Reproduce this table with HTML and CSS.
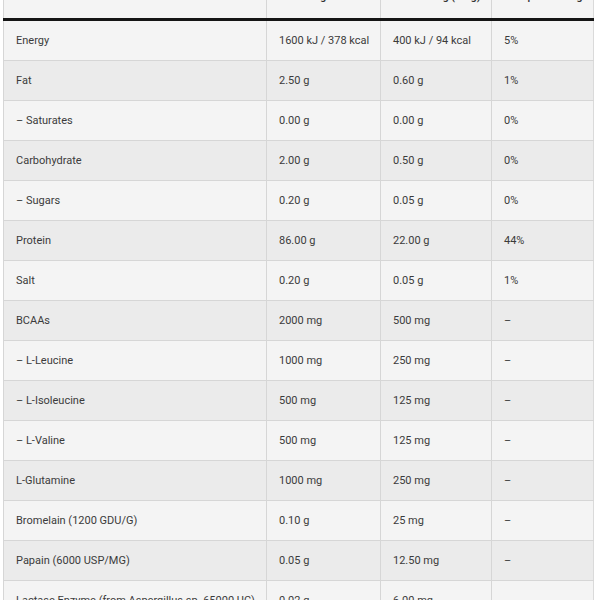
FILE: index.html
```html
<!DOCTYPE html>
<html>
<head>
<meta charset="utf-8">
<link rel="stylesheet" href="styles.css">
</head>
<body>
<div class="wrap">
<table class="nutri">
<colgroup>
<col class="c1"><col class="c2"><col class="c3"><col class="c4">
</colgroup>
<thead>
<tr><th>Nutrition facts</th><th>Per 100 g</th><th>Per serving (25 g)</th><th>% RI per serving</th></tr>
</thead>
<tbody>
<tr><td>Energy</td><td>1600 kJ / 378 kcal</td><td>400 kJ / 94 kcal</td><td>5%</td></tr>
<tr><td>Fat</td><td>2.50 g</td><td>0.60 g</td><td>1%</td></tr>
<tr><td>– Saturates</td><td>0.00 g</td><td>0.00 g</td><td>0%</td></tr>
<tr><td>Carbohydrate</td><td>2.00 g</td><td>0.50 g</td><td>0%</td></tr>
<tr><td>– Sugars</td><td>0.20 g</td><td>0.05 g</td><td>0%</td></tr>
<tr><td>Protein</td><td>86.00 g</td><td>22.00 g</td><td>44%</td></tr>
<tr><td>Salt</td><td>0.20 g</td><td>0.05 g</td><td>1%</td></tr>
<tr><td>BCAAs</td><td>2000 mg</td><td>500 mg</td><td>–</td></tr>
<tr><td>– L-Leucine</td><td>1000 mg</td><td>250 mg</td><td>–</td></tr>
<tr><td>– L-Isoleucine</td><td>500 mg</td><td>125 mg</td><td>–</td></tr>
<tr><td>– L-Valine</td><td>500 mg</td><td>125 mg</td><td>–</td></tr>
<tr><td>L-Glutamine</td><td>1000 mg</td><td>250 mg</td><td>–</td></tr>
<tr><td>Bromelain (1200 GDU/G)</td><td>0.10 g</td><td>25 mg</td><td>–</td></tr>
<tr><td>Papain (6000 USP/MG)</td><td>0.05 g</td><td>12.50 mg</td><td>–</td></tr>
<tr><td>Lactase Enzyme (from Aspergillus sp. 65000 UC)</td><td>0.02 g</td><td>6.00 mg</td><td>–</td></tr>
</tbody>
</table>
</div>
</body>
</html>
```
FILE: styles.css
```css
html, body {
  margin: 0;
  padding: 0;
  background: #ffffff;
}
.wrap {
  padding: 0 7px 0 3px;
  overflow: hidden;
  height: 600px;
}
.nutri {
  margin-top: -18px;
  width: 590px;
  border-collapse: collapse;
  table-layout: fixed;
  font-family: Roboto, "Liberation Sans", sans-serif;
  font-size: 11px;
  color: #3b3b3b;
  border-left: 1px solid #dadada;
  border-right: 1px solid #dadada;
}
.c1 { width: 263px; }
.c2 { width: 114px; }
.c3 { width: 111px; }
.c4 { width: 102px; }
.nutri th {
  background: #f4f4f4;
  font-weight: 500;
  text-align: left;
  white-space: nowrap;
  padding: 7px 12px 13px;
  line-height: 16px;
  height: 16px;
  border-left: 1px solid #d6d6d6;
  border-bottom: 3px solid #151515;
  color: #333;
}
.nutri td {
  padding: 0 12px;
  height: 39px;
  line-height: 16px;
  border-left: 1px solid #d6d6d6;
  border-bottom: 1px solid #d6d6d6;
  white-space: nowrap;
  overflow: hidden;
}
.nutri tbody tr:nth-child(odd) td { background: #f4f4f4; }
.nutri tbody tr:nth-child(even) td { background: #ebebeb; }
```
